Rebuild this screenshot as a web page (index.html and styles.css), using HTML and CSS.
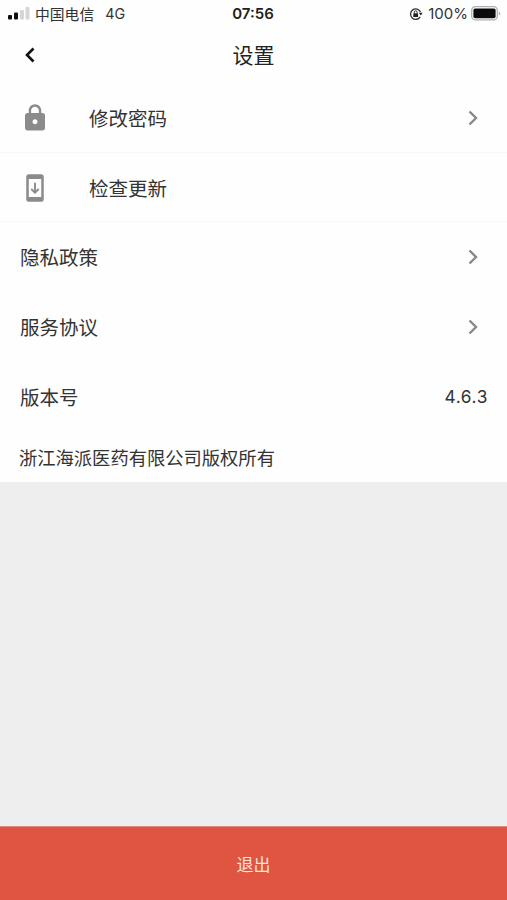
FILE: index.html
```html
<!DOCTYPE html>
<html lang="zh-CN">
<head>
<meta charset="utf-8">
<title>设置</title>
<link rel="stylesheet" href="styles.css">
</head>
<body>
<div class="screen">
  <header class="status">
    <div class="status-left">
      <svg class="signal" width="22" height="14" viewBox="0 0 22 14"><rect x="0" y="8" width="4" height="4.5" rx="1"/><rect x="6" y="5.5" width="4" height="7" rx="1"/><rect class="dim" x="12" y="3" width="4" height="9.5" rx="1"/><rect class="dim" x="17.5" y="0" width="4" height="12.5" rx="1"/></svg>
      <span class="carrier">中国电信</span>
      <span class="network">4G</span>
    </div>
    <time class="clock">07:56</time>
    <div class="status-right">
      <svg class="rotation" width="14" height="14" viewBox="0 0 14 14"><path class="ring" d="M11.2 9.8A5.2 5.2 0 1 1 11.5 5"/><path d="M9.8 5.8h3.8l-1.7 2.8z"/><rect x="4.3" y="6.2" width="4.8" height="3.8" rx=".6"/><path class="shackle" d="M5.3 6.3V5.2a1.4 1.4 0 0 1 2.8 0v1.1"/></svg>
      <span class="percent">100%</span>
      <svg class="battery" width="31" height="15" viewBox="0 0 31 15"><rect class="shell" x=".7" y=".7" width="25.6" height="13.2" rx="3.6"/><rect x="2.4" y="2.4" width="22.2" height="9.8" rx="1.8"/><path class="cap" d="M27.8 5.2c2 .8 2 3.6 0 4.4z"/></svg>
    </div>
  </header>
  <nav class="navbar">
    <svg class="back" width="12" height="16" viewBox="0 0 12 16"><path d="M9.5 1.5 3 8l6.5 6.5"/></svg>
    <h1 class="title">设置</h1>
  </nav>
  <main class="list">
    <div class="row ruled">
      <svg class="icon" width="30" height="30" viewBox="0 0 24 24"><path d="M18 8h-1V6c0-2.76-2.24-5-5-5S7 3.24 7 6v2H6c-1.1 0-2 .9-2 2v10c0 1.1.9 2 2 2h12c1.1 0 2-.9 2-2V10c0-1.1-.9-2-2-2zm-6 9c-1.1 0-2-.9-2-2s.9-2 2-2 2 .9 2 2-.9 2-2 2zm3.1-9H8.9V6c0-1.71 1.39-3.1 3.1-3.1s3.1 1.39 3.1 3.1v2z"/></svg>
      <span class="label">修改密码</span>
      <svg class="chevron" width="12" height="16" viewBox="0 0 12 16"><path d="m2.5 1.5 6.5 6.5-6.5 6.5"/></svg>
    </div>
    <div class="row ruled">
      <svg class="icon" width="30" height="30" viewBox="0 0 24 24"><path fill-rule="evenodd" d="M7 1h10a2 2 0 0 1 2 2v18a2 2 0 0 1-2 2H7a2 2 0 0 1-2-2V3a2 2 0 0 1 2-2zm0 3.8v14.4h10V4.8z"/><path class="arrow" d="M12 7.8v7.6M9 12.8l3 3 3-3"/></svg>
      <span class="label">检查更新</span>
    </div>
    <div class="row">
      <span class="label">隐私政策</span>
      <svg class="chevron" width="12" height="16" viewBox="0 0 12 16"><path d="m2.5 1.5 6.5 6.5-6.5 6.5"/></svg>
    </div>
    <div class="row">
      <span class="label">服务协议</span>
      <svg class="chevron" width="12" height="16" viewBox="0 0 12 16"><path d="m2.5 1.5 6.5 6.5-6.5 6.5"/></svg>
    </div>
    <div class="row">
      <span class="label">版本号</span>
      <span class="version">4.6.3</span>
    </div>
    <p class="copyright">浙江海派医药有限公司版权所有</p>
  </main>
  <button class="logout" type="button">退出</button>
</div>
</body>
</html>
```

FILE: styles.css
```css
* { box-sizing: border-box; }
body {
  margin: 0;
  font-family: Inter, "Noto Sans CJK SC", sans-serif;
  color: #333;
}
svg { display: block; flex: none; }
.screen {
  display: flex;
  flex-direction: column;
  height: 900px;
  background: #eee;
}
.status {
  display: grid;
  grid-template-columns: 1fr auto 1fr;
  align-items: center;
  height: 27px;
  padding: 0 5px 0 8px;
  background: #fefefe;
  font-size: 14.8px;
  line-height: 24px;
}
.status-left, .status-right { display: flex; align-items: center; }
.status-right { justify-content: flex-end; }
.signal { fill: #111; }
.signal .dim { fill: #d6d6d6; }
.carrier { margin-left: 5px; padding-top: 2px; }
.network { margin-left: 11px; font-size: 14.3px; }
.clock { margin: 0 1px 0 -3px; font-size: 15px; font-weight: 600; color: #222; }
.rotation { margin-right: 5px; fill: #222; }
.rotation .ring, .rotation .shackle { fill: none; stroke: #333; stroke-width: 1.3; }
.rotation .shackle { stroke-width: 1; }
.percent { margin-right: 3px; font-size: 15px; }
.battery { fill: #0a0a0a; }
.battery .shell { fill: none; stroke: #b0b0b0; stroke-width: 1.3; }
.battery .cap { fill: #b0b0b0; }
.navbar {
  display: grid;
  grid-template-columns: 1fr auto 1fr;
  align-items: center;
  height: 56px;
  padding: 0 24px;
  background: #fefefe;
}
.back { fill: none; stroke: #111; stroke-width: 2.6; }
.title { margin: 0; padding-top: 2px; font-size: 21px; line-height: 32px; font-weight: 400; color: #222; }
.list { background: #fefefe; }
.row {
  display: flex;
  align-items: center;
  height: 69.7px;
  padding: 0 19px 0 20px;
}
.ruled { padding-top: 2px; border-bottom: 1px solid #f7f7f7; }
.icon { margin-right: 39px; fill: #8b8b8b; }
.icon .arrow { fill: none; stroke: #8b8b8b; stroke-width: 1.5; }
.label { flex: 1; padding-top: 2px; font-size: 19.5px; line-height: 30px; }
.chevron { margin-right: 9px; fill: none; stroke: #888; stroke-width: 2.4; }
.version { font-size: 17.3px; letter-spacing: .6px; }
.copyright {
  margin: 0;
  height: 51px;
  padding: 2px 19px 0;
  font-size: 18.3px;
  line-height: 51px;
}
.logout {
  width: 100%;
  height: 74px;
  margin-top: auto;
  padding: 0;
  border: 0;
  border-top: 1px solid #d98c80;
  background: #e05541;
  color: #fbe3df;
  font: inherit;
  font-size: 17px;
}
```
